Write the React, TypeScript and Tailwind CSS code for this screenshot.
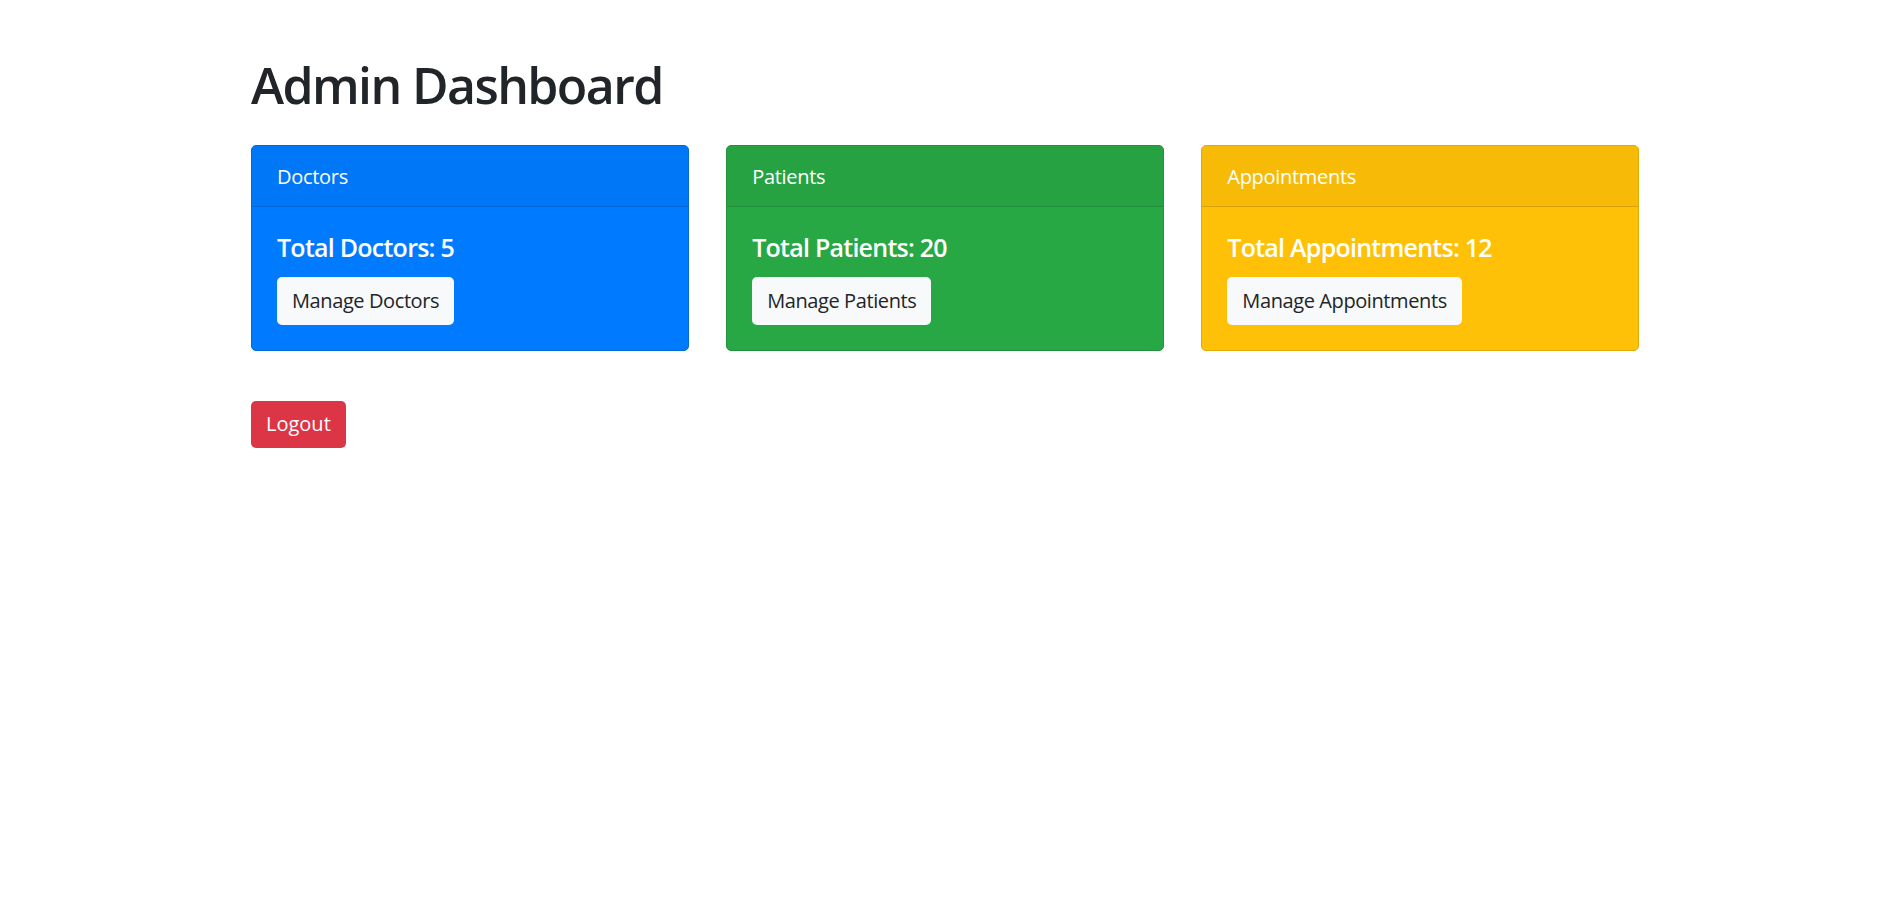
const cards = [
  {
    title: 'Doctors',
    total: 'Total Doctors: 5',
    action: 'Manage Doctors',
    body: 'bg-[#007bff] border-[#0069d9]',
    header: 'bg-[#0077f7]',
  },
  {
    title: 'Patients',
    total: 'Total Patients: 20',
    action: 'Manage Patients',
    body: 'bg-[#28a745] border-[#23923d]',
    header: 'bg-[#27a243]',
  },
  {
    title: 'Appointments',
    total: 'Total Appointments: 12',
    action: 'Manage Appointments',
    body: 'bg-[#ffc107] border-[#e0aa07]',
    header: 'bg-[#f7bb07]',
  },
];

const App = () => {
  return (
    <div
      className="min-h-screen bg-white text-[#212529]"
      style={{ fontFamily: '"Open Sans", "Noto Sans", sans-serif' }}
    >
      <div className="w-[1390px] mx-auto pl-[2px] pt-[55px]">
        <h1 className="text-[50px] leading-[60px] font-semibold mb-[30px] tracking-[-1.6px]">
          Admin Dashboard
        </h1>

        {/* Cards */}
        <div className="grid grid-cols-3 gap-[37.5px]">
          {cards.map((card) => (
            <div
              key={card.title}
              className={`${card.body} border rounded-[5px] overflow-hidden text-white`}
            >
              <div
                className={`${card.header} border-b border-black/[0.125] px-[25px] h-[61px] flex items-center text-[20px] pt-[2px] tracking-[-0.3px]`}
              >
                {card.title}
              </div>
              <div className="p-[25px]">
                <h5 className="text-[25px] leading-[30px] font-semibold mb-[15px] tracking-[-0.75px]">
                  {card.total}
                </h5>
                <button className="bg-[#f8f9fa] text-[#212529] rounded-[5px] px-[15px] h-[47.5px] text-[20px] leading-[30px] tracking-[-0.4px]">
                  {card.action}
                </button>
              </div>
            </div>
          ))}
        </div>

        <button className="mt-[50px] bg-[#dc3545] text-white rounded-[5px] px-[15px] h-[47.5px] text-[20px] leading-[30px]">
          Logout
        </button>
      </div>
    </div>
  );
};

export default App;
